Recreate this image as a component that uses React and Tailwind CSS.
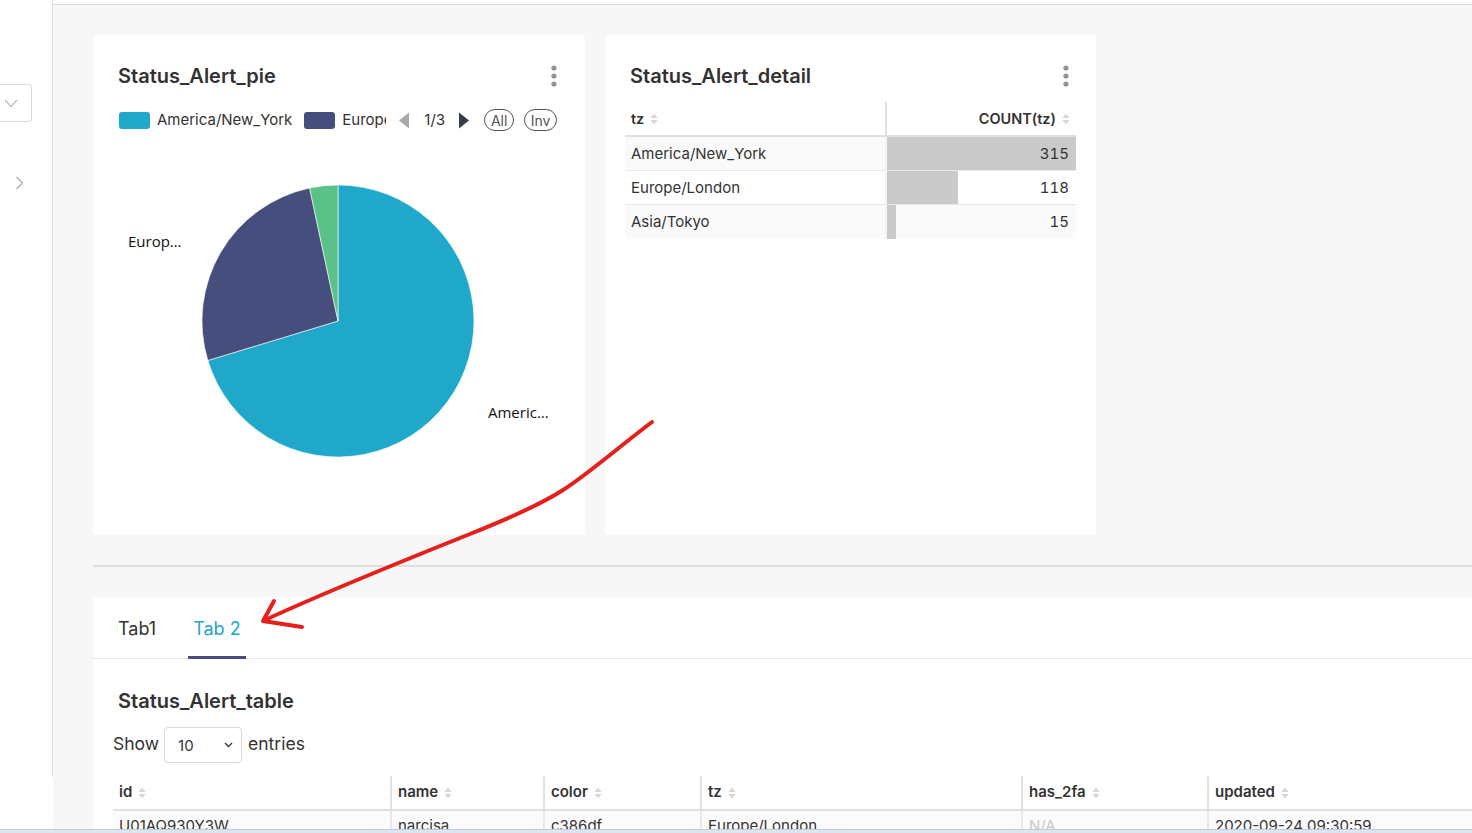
import React from "react";

const pieColors = { ny: "#1fa8c9", eu: "#454e7c", asia: "#5ac189" };

const detailRows = [
  { tz: "America/New_York", count: 315 },
  { tz: "Europe/London", count: 118 },
  { tz: "Asia/Tokyo", count: 15 },
];

const tableCols = [
  { name: "id", w: "w-[277px]" },
  { name: "name", w: "w-[153px]" },
  { name: "color", w: "w-[157px]" },
  { name: "tz", w: "w-[321px]" },
  { name: "has_2fa", w: "w-[186px]" },
  { name: "updated", w: "w-[320px]" },
];

const firstRow = ["U01AQ930Y3W", "narcisa", "c386df", "Europe/London", "N/A", "2020-09-24 09:30:59"];

function SortIcon() {
  return (
    <svg width="8" height="12" viewBox="0 0 8 12" className="ml-[6px] shrink-0">
      <path d="M4 0.5 L7.5 5 L0.5 5 Z" fill="#d6d6d6" />
      <path d="M4 11.5 L7.5 7 L0.5 7 Z" fill="#d6d6d6" />
    </svg>
  );
}

function Kebab() {
  return (
    <svg width="6" height="22" viewBox="0 0 6 22">
      <circle cx="3" cy="3" r="2.6" fill="#8e979f" />
      <circle cx="3" cy="11" r="2.6" fill="#8e979f" />
      <circle cx="3" cy="19" r="2.6" fill="#8e979f" />
    </svg>
  );
}

function PieCard() {
  return (
    <div className="w-[492px] h-[500px] bg-white rounded-[4px] p-5 flex flex-col">
      <div className="h-[42px] flex items-center justify-between pl-[5px] pr-[8px]">
        <h2 className="text-[20px] font-semibold text-[#323232]">Status_Alert_pie</h2>
        <Kebab />
      </div>
      <div className="mt-[11px] h-[24px] flex items-center pl-[6px] text-[15px] text-[#333]">
        <span className="w-[31px] h-[17px] rounded-[3px]" style={{ background: pieColors.ny }} />
        <span className="ml-[7px]">America/New_York</span>
        <span className="ml-[12px] w-[31px] h-[17px] rounded-[3px]" style={{ background: pieColors.eu }} />
        <span className="ml-[7px] w-[44px] overflow-hidden whitespace-nowrap">Europe/London</span>
        <svg width="12" height="17" viewBox="0 0 12 17" className="ml-[12px]">
          <path d="M11 0.5 L11 16.5 L1 8.5 Z" fill="#aaaaaa" />
        </svg>
        <span className="ml-[14px]">1/3</span>
        <svg width="12" height="17" viewBox="0 0 12 17" className="ml-[13px]">
          <path d="M1 0.5 L1 16.5 L11 8.5 Z" fill="#2f3e4c" />
        </svg>
        <span className="ml-[14px] h-[22px] w-[30px] rounded-full border border-[#555] text-[14px] text-[#555] flex items-center justify-center">
          All
        </span>
        <span className="ml-[10px] h-[22px] w-[33px] rounded-full border border-[#555] text-[14px] text-[#555] flex items-center justify-center">
          Inv
        </span>
      </div>
      <svg width="452" height="360" viewBox="0 0 452 360" className="mt-[8px]">
        <path d="M225,181 L225,45 A136,136 0 1 1 94.85,220.48 Z" fill={pieColors.ny} stroke="#fff" strokeWidth="0.6" />
        <path d="M225,181 L94.85,220.48 A136,136 0 0 1 196.6,48.0 Z" fill={pieColors.eu} stroke="#fff" strokeWidth="0.6" />
        <path d="M225,181 L196.6,48.0 A136,136 0 0 1 225,45 Z" fill={pieColors.asia} stroke="#fff" strokeWidth="0.6" />
        <text x="15" y="107" fontSize="15" fill="#111" fontFamily="'Open Sans', sans-serif">Europ…</text>
        <text x="375" y="278" fontSize="15" fill="#111" fontFamily="'Open Sans', sans-serif">Americ…</text>
      </svg>
    </div>
  );
}

function DetailCard() {
  return (
    <div className="w-[491px] h-[500px] bg-white rounded-[4px] p-5">
      <div className="h-[42px] mb-[5px] flex items-center justify-between pl-[5px] pr-[7px]">
        <h2 className="text-[20px] font-semibold text-[#323232]">Status_Alert_detail</h2>
        <Kebab />
      </div>
      <div className="text-[15px] text-[#333]">
        <div className="h-[35px] flex border-b-2 border-[#e0e0e0] font-semibold text-[14.5px]">
          <div className="w-[260px] pl-[6px] flex items-center">
            tz
            <SortIcon />
          </div>
          <div className="flex-1 border-l-2 border-[#e0e0e0] flex items-center justify-end pr-[6px]">
            COUNT(tz)
            <SortIcon />
          </div>
        </div>
        {detailRows.map((r, i) => (
          <div
            key={r.tz}
            className={
              "h-[34px] flex pt-[1px] " +
              (i % 2 === 0 ? "bg-[#fafafa] " : "bg-white ") +
              (i < detailRows.length - 1 ? "border-b border-[#e8e8e8]" : "")
            }
          >
            <div className="w-[260px] pl-[6px] flex items-center">{r.tz}</div>
            <div className="flex-1 border-l-2 border-[#f2f2f2] relative flex items-center justify-end pr-[7px] tabular-nums">
              <div className="absolute left-0 -top-[1px] bottom-0 bg-[#cacaca]" style={{ width: `${(r.count / 315) * 100}%` }} />
              <span className="relative">{r.count}</span>
            </div>
          </div>
        ))}
      </div>
    </div>
  );
}

function TabsSection() {
  return (
    <div className="mt-[30px] bg-white">
      <div className="h-[62px] border-b border-[#e8e8e8] flex pl-5 gap-[27px] text-[18px]">
        <div className="h-[61px] px-[5px] pt-[2px] flex items-center text-[#333]">Tab1</div>
        <div className="h-[61px] px-[5px] pt-[2px] flex items-center text-[#20a7c9] relative">
          Tab 2
          <span className="absolute left-0 right-0 bottom-[-1px] h-[3px] bg-[#484e7c]" />
        </div>
      </div>
      <div className="pl-5">
        <h2 className="mt-[21px] h-[42px] pl-[5px] flex items-center text-[20px] font-semibold text-[#323232]">
          Status_Alert_table
        </h2>
        <div className="mt-[5px] h-[36px] flex items-center text-[17.5px] text-[#333]">
          <span className="-mt-[1px]">Show</span>
          <div className="ml-[5px] w-[78px] h-[36px] border border-[#d9d9d9] rounded-[4px] flex items-center justify-between pl-[13px] pr-[8px] text-[15px]">
            <span className="mt-[2px]">10</span>
            <svg width="9" height="6" viewBox="0 0 9 6">
              <path d="M1 1 L4.5 4.5 L8 1" fill="none" stroke="#333" strokeWidth="1.3" />
            </svg>
          </div>
          <span className="ml-[6px] -mt-[1px]">entries</span>
        </div>
        <div className="mt-[13px] text-[15px] text-[#333]">
          <div className="h-[35px] flex border-b-2 border-[#e0e0e0] font-semibold">
            {tableCols.map((c, i) => (
              <div
                key={c.name}
                className={c.w + " shrink-0 pl-[6px] flex items-center " + (i > 0 ? "border-l-2 border-[#e0e0e0]" : "")}
              >
                {c.name}
                <SortIcon />
              </div>
            ))}
          </div>
          <div className="h-[34px] flex bg-[#fbfbfb]">
            {tableCols.map((c, i) => (
              <div
                key={c.name}
                className={
                  c.w +
                  " shrink-0 pl-[6px] pt-[5px] leading-[20px] " +
                  (i > 0 ? "border-l-2 border-[#e8e8e8] " : "") +
                  (firstRow[i] === "N/A" ? "text-[#c8c8c8]" : "")
                }
              >
                {firstRow[i]}
              </div>
            ))}
          </div>
        </div>
      </div>
    </div>
  );
}

function Arrow() {
  return (
    <svg width="1472" height="833" className="absolute inset-0 pointer-events-none">
      <path
        d="M652,422 C615,450 588,474 563,490 C540,505 505,520 470,534 C400,562 330,590 265,620"
        fill="none"
        stroke="#e5201c"
        strokeWidth="4"
        strokeLinecap="round"
      />
      <path d="M274,601 L263,621 L302,627" fill="none" stroke="#e5201c" strokeWidth="4" strokeLinecap="round" strokeLinejoin="round" />
    </svg>
  );
}

export default function App() {
  return (
    <div className="relative w-[1472px] h-[833px] overflow-hidden flex flex-col font-[family-name:Inter,'Noto_Sans',sans-serif]">
      <div className="flex-1 min-h-0 flex">
        <aside className="w-[53px] shrink-0 bg-white">
          <div className="h-[777px] border-r border-[#e0e0e0] flex flex-col">
            <div className="mt-[84px] w-[32px] h-[38px] border border-l-0 border-[#d9d9d9] rounded-r-[4px] flex items-center pl-[4px]">
              <svg width="14" height="9" viewBox="0 0 14 9">
                <path d="M1 1 L7 7.5 L13 1" fill="none" stroke="#a6a6a6" strokeWidth="1.1" />
              </svg>
            </div>
            <div className="mt-[54px] pl-[15px]">
              <svg width="9" height="14" viewBox="0 0 9 14">
                <path d="M1.5 1 L7.5 7 L1.5 13" fill="none" stroke="#a6a6a6" strokeWidth="1.1" />
              </svg>
            </div>
          </div>
        </aside>
        <main className="flex-1 min-w-0 flex flex-col">
          <div className="h-[5px] shrink-0 bg-white border-b border-[#dedede]" />
          <div className="flex-1 bg-[#f7f7f7] pl-10 pt-[30px]">
            <div className="flex gap-5">
              <PieCard />
              <DetailCard />
            </div>
            <div className="mt-[30px] h-[2px] bg-[#dedede]" />
            <TabsSection />
          </div>
        </main>
      </div>
      <div className="h-[4px] shrink-0 bg-[#dce5f0] border-t border-[#c3cbd5]" />
      <Arrow />
    </div>
  );
}
